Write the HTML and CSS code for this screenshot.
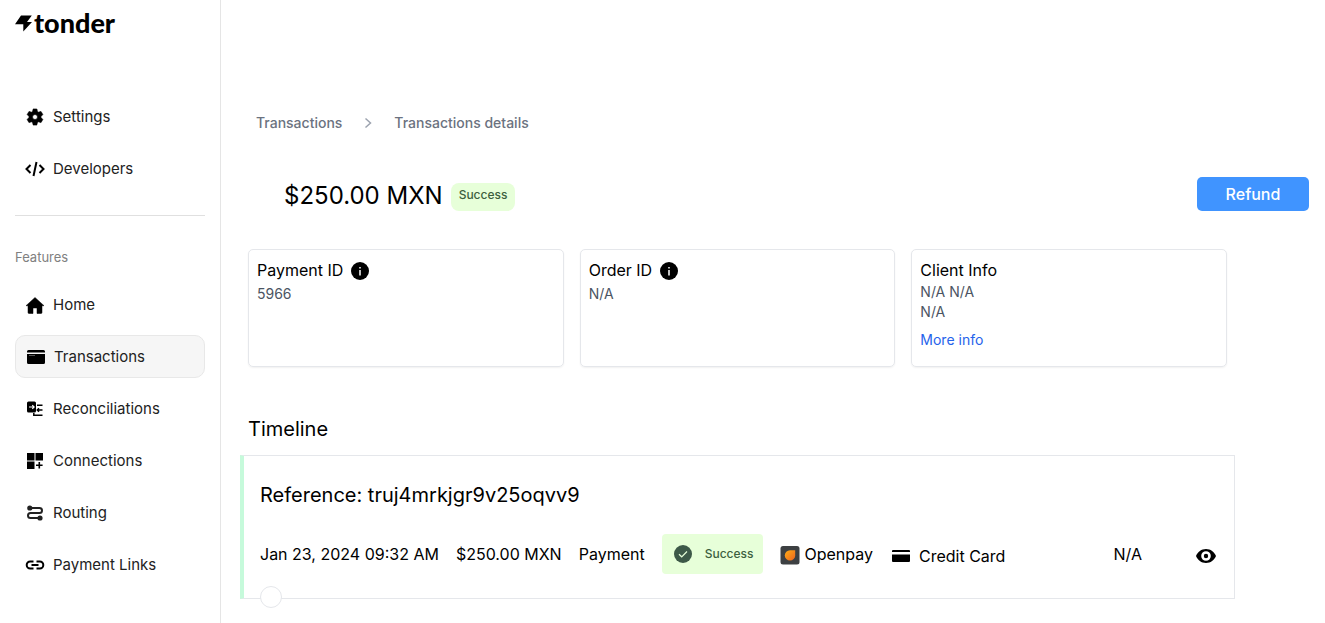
FILE: index.html
```html
<!DOCTYPE html>
<html lang="en">
<head>
<meta charset="utf-8">
<meta name="viewport" content="width=device-width, initial-scale=1">
<title>Transaction details</title>
<link rel="stylesheet" href="styles.css">
</head>
<body>
<div class="app">
  <aside class="sidebar">
    <a class="logo" href="#">
      <svg class="logo-mark" viewBox="0 0 17 17" aria-hidden="true"><path d="M6 .5h10.800L12 7h5L8.300 16.500V9.200H0z"/></svg>
      <span>tonder</span>
    </a>
    <nav class="nav" aria-label="Account">
      <a class="nav-item" href="#">
        <svg class="icon" viewBox="0 0 24 24"><path d="M19.14 12.94c.04-.3.06-.61.06-.94 0-.32-.02-.64-.07-.94l2.03-1.58a.49.49 0 0 0 .12-.61l-1.92-3.32a.49.49 0 0 0-.59-.22l-2.39.96c-.5-.38-1.03-.7-1.62-.94l-.36-2.54a.48.48 0 0 0-.48-.41h-3.84c-.24 0-.43.17-.47.41l-.36 2.54c-.59.24-1.13.57-1.62.94l-2.39-.96a.48.48 0 0 0-.59.22L2.74 8.87c-.12.21-.08.47.12.61l2.03 1.58c-.05.3-.09.63-.09.94s.02.64.07.94l-2.03 1.58a.49.49 0 0 0-.12.61l1.92 3.32c.12.22.37.29.59.22l2.39-.96c.5.38 1.03.7 1.62.94l.36 2.54c.05.24.24.41.48.41h3.84c.24 0 .44-.17.47-.41l.36-2.54c.59-.24 1.13-.56 1.62-.94l2.39.96c.22.08.47 0 .59-.22l1.92-3.32a.48.48 0 0 0-.12-.61zM12 15a3 3 0 1 1 0-6 3 3 0 0 1 0 6z" stroke="#000" stroke-width=".8"/></svg>
        Settings
      </a>
      <a class="nav-item" href="#">
        <svg class="icon line" viewBox="0 0 20 20"><path d="M5.500 6 1.500 10l4 4M14.500 6l4 4-4 4M11.500 3l-3 14"/></svg>
        Developers
      </a>
    </nav>
    <hr class="divider">
    <h2 class="nav-title">Features</h2>
    <nav class="nav" aria-label="Features">
      <a class="nav-item" href="#">
        <svg class="icon" viewBox="0 0 20 20"><path d="M10 2.500 19 10.700h-2V17.500a1 1 0 0 1-1 1h-4v-5.500H8v5.500H4a1 1 0 0 1-1-1v-6.800H1z" stroke="#000" stroke-linejoin="round" stroke-width=".5"/></svg>
        Home
      </a>
      <a class="nav-item active" href="#" aria-current="page">
        <svg class="icon" viewBox="0 0 20 20"><path d="M1 5.500V4.500Q1 3 2.500 3h15Q19 3 19 4.500v1zM1 7h18v8.500q0 1.500-1.500 1.500h-15Q1 17 1 15.500z"/><path d="M3 8.500h6" stroke="#555" stroke-width="1"/></svg>
        Transactions
      </a>
      <a class="nav-item" href="#">
        <svg class="icon" viewBox="0 0 20 20"><path d="M3.500 2.500h6Q11 2.500 11 4v8q0 1.500-1.500 1.500h-6Q2 13.500 2 12V4q0-1.500 1.500-1.500z"/><path d="M4 8h5M7.300 6.200 9.100 8l-1.800 1.800" fill="none" stroke="#fff" stroke-width="1.200"/><path d="M12 6.300h5.500M17.500 11h-5M14 9.300 12.300 11l1.700 1.700M8.800 14v2.300h8.700" fill="none" stroke="#000" stroke-width="1.500"/></svg>
        Reconciliations
      </a>
      <a class="nav-item" href="#">
        <svg class="icon" viewBox="0 0 20 20"><path d="M2 2h7.500v7.500H2zM10.500 2H18v7.500h-7.500zM2 10.500h7.500V18H2z"/><path d="M14.300 11v6.500M11 14.300h6.600" fill="none" stroke="#000" stroke-width="1.600"/></svg>
        Connections
      </a>
      <a class="nav-item" href="#">
        <svg class="icon line dark" viewBox="0 0 20 20"><path d="M4.500 5h10a2.500 2.500 0 0 1 0 5h-9a2.500 2.500 0 0 0 0 5h10"/><circle cx="4.800" cy="5" r="1.600" fill="#222"/><circle cx="15" cy="15" r="1.600" fill="#222"/></svg>
        Routing
      </a>
      <a class="nav-item" href="#">
        <svg class="icon line" viewBox="0 0 20 20"><path d="M8.500 6.500H5.200a3.500 3.500 0 0 0 0 7h3.300M11.500 6.500h3.300a3.500 3.500 0 0 1 0 7h-3.300M6.500 10h7"/></svg>
        Payment Links
      </a>
    </nav>
  </aside>

  <main class="main">
    <nav class="breadcrumb" aria-label="Breadcrumb">
      <a href="#">Transactions</a>
      <svg class="chevron" viewBox="0 0 12 12" aria-hidden="true"><path d="M3.500 1.500 8.500 6l-5 4.500"/></svg>
      <a href="#">Transactions details</a>
    </nav>

    <header class="header">
      <h1 class="amount">$250.00 MXN</h1>
      <span class="badge">Success</span>
      <button class="refund" type="button">Refund</button>
    </header>

    <section class="cards">
      <article class="card">
        <h2 class="card-title">Payment ID
          <svg class="info" viewBox="0 0 18 20" role="img" aria-label="Info"><circle cx="9" cy="11" r="9"/><path d="M9 7v1.500M9 10v5.500" stroke="#fff" stroke-width="1.500"/></svg>
        </h2>
        <p class="card-text">5966</p>
      </article>
      <article class="card">
        <h2 class="card-title">Order ID
          <svg class="info" viewBox="0 0 18 20" role="img" aria-label="Info"><circle cx="9" cy="11" r="9"/><path d="M9 7v1.500M9 10v5.500" stroke="#fff" stroke-width="1.500"/></svg>
        </h2>
        <p class="card-text">N/A</p>
      </article>
      <article class="card compact">
        <h2 class="card-title">Client Info</h2>
        <p class="card-text">N/A N/A</p>
        <p class="card-text">N/A</p>
        <a class="more" href="#">More info</a>
      </article>
    </section>

    <h2 class="timeline-title">Timeline</h2>
    <section class="timeline">
      <h3 class="reference">Reference: truj4mrkjgr9v25oqvv9</h3>
      <div class="event">
        <span>Jan 23, 2024 09:32 AM</span>
        <span>$250.00 MXN</span>
        <span>Payment</span>
        <span class="status">
          <svg class="check" viewBox="0 0 18 18" aria-hidden="true"><circle cx="9" cy="9" r="9" fill="#3d5948"/><path d="m5 9.300 2.700 2.500L13 6.500" fill="none" stroke="#e7ffd9" stroke-width="1.200"/></svg>
          Success
        </span>
        <span class="provider">
          <svg class="provider-logo" viewBox="0 0 20 22" aria-hidden="true"><defs><linearGradient id="drop" x1="0" y1="0" x2="1" y2="1"><stop offset="0" stop-color="#ffad16"/><stop offset="1" stop-color="#ec641f"/></linearGradient></defs><rect x=".5" y="3" width="19" height="18.500" rx="2.500" fill="#3d4042"/><path d="M15.200 7.200V12.400A5.200 5.200 0 1 1 10 7.200z" fill="url(#drop)"/></svg>
          Openpay
        </span>
        <span class="method">
          <svg class="card-icon" viewBox="0 0 18 14" aria-hidden="true"><path d="M0 3V2q0-1 1-1h16q1 0 1 1v1zM0 5.500h18V12q0 1-1 1H1q-1 0-1-1z"/></svg>
          Credit Card
        </span>
        <span class="event-end">N/A</span>
        <button class="view" type="button" aria-label="View details">
          <svg class="eye" viewBox="0 0 20 14" aria-hidden="true"><path fill-rule="evenodd" d="M10 0c4.600 0 8.300 2.800 10 7-1.700 4.200-5.400 7-10 7S1.700 11.200 0 7C1.700 2.800 5.400 0 10 0zm0 2.200a4.800 4.800 0 1 0 0 9.600 4.800 4.800 0 0 0 0-9.600zm0 2.600a2.200 2.200 0 1 1 0 4.400 2.200 2.200 0 0 1 0-4.400z"/></svg>
        </button>
      </div>
      <span class="dot"></span>
    </section>
  </main>
</div>
</body>
</html>
```
FILE: styles.css
```css
* { box-sizing: border-box; }
body {
  margin: 0;
  background: #fff;
  color: #000;
  font-family: Inter, "Liberation Sans", sans-serif;
  font-size: 16px;
  line-height: 24px;
}
h1, h2, h3, p { margin: 0; font-weight: 400; }
a { color: inherit; text-decoration: none; }
button { border: 0; font: inherit; cursor: pointer; }
svg { display: block; flex: none; }

.app { display: flex; min-height: 100vh; }

.sidebar {
  flex: 0 0 221px;
  padding: 7px 15px 0;
  border-right: 1px solid #e5e5e5;
}
.logo {
  display: flex;
  align-items: center;
  height: 32px;
  margin-bottom: 56px;
  font-family: Lato, sans-serif;
  font-size: 27px;
  font-weight: 900;
}
.logo-mark { width: 17px; height: 17px; margin-right: 2px; }
.nav { display: flex; flex-direction: column; gap: 9px; }
.nav-item {
  display: flex;
  align-items: center;
  gap: 8px;
  height: 43px;
  padding: 0 9px;
  border: 1px solid transparent;
  border-radius: 10px;
  color: #222;
  font-size: 15px;
}
.nav-item.active { padding: 0 10px; background: #f6f6f6; border-color: #e8e8e8; }
.icon { width: 20px; height: 20px; }
.line { fill: none; stroke: #000; stroke-width: 2; }
.line.dark { stroke: #222; }
.divider {
  margin: 25px 0 0;
  border: 0;
  border-top: 1px solid #e0e0e0;
}
.nav-title {
  margin: 31px 0 16px;
  color: #808080;
  font-size: 13px;
  line-height: 20px;
}

.main { flex: 1; min-width: 0; padding: 111px 16px 24px 19px; }
.breadcrumb {
  display: flex;
  align-items: center;
  gap: 20px;
  padding-left: 16px;
  color: #6b7280;
  font-size: 14px;
  font-weight: 500;
}
.chevron {
  width: 12px;
  height: 12px;
  fill: none;
  stroke: #9ca3af;
  stroke-width: 1.5;
}
.header {
  display: flex;
  align-items: flex-end;
  gap: 8px;
  margin-top: 42px;
  padding-left: 44px;
}
.amount { font-size: 24px; line-height: 30px; }
.badge {
  height: 28px;
  padding: 0 8px;
  border-radius: 8px;
  background: #e7ffd9;
  color: #3d5f3f;
  font-size: 12px;
  font-weight: 500;
}
.refund {
  width: 112px;
  height: 34px;
  margin-left: auto;
  border-radius: 5px;
  background: #4094ff;
  color: #fff;
  font-weight: 500;
}

.cards {
  display: grid;
  grid-template-columns: repeat(3, 1fr);
  gap: 16px;
  margin: 38px 82px 0 8px;
}
.card {
  min-height: 118px;
  padding: 8px;
  border: 1px solid #e5e7eb;
  border-radius: 5px;
  box-shadow: 0 1px 2px rgba(0, 0, 0, .06);
}
.card-title {
  display: flex;
  align-items: center;
  gap: 8px;
  font-size: 16px;
}
.info { width: 18px; height: 20px; }
.card-text { margin-top: 2px; color: #4b5563; font-size: 14px; line-height: 20px; }
.compact .card-text { margin: 0; }
.more {
  display: block;
  margin-top: 8px;
  color: #2563eb;
  font-size: 14px;
  line-height: 20px;
}

.timeline-title { margin: 48px 0 0 8px; font-size: 20px; line-height: 28px; }
.timeline {
  position: relative;
  margin: 12px 74px 0 0;
  padding: 24px 16px;
  border: 1px solid #e5e7eb;
  border-left: 4px solid #c6fadb;
}
.reference { font-size: 20px; line-height: 30px; }
.event { display: flex; align-items: center; gap: 17px; margin-top: 24px; white-space: nowrap; }
.status {
  display: flex;
  align-items: center;
  gap: 13px;
  height: 40px;
  padding: 0 10px 0 12px;
  border-radius: 4px;
  background: #e7ffd9;
  color: #3d5f3f;
  font-size: 12px;
  font-weight: 500;
}
.check { width: 18px; height: 18px; }
.provider { display: flex; align-items: center; gap: 4px; }
.provider-logo { width: 20px; height: 22px; }
.method { display: flex; align-items: center; gap: 9px; padding: 4px 0 0 2px; }
.card-icon { width: 18px; height: 14px; }
.event-end { margin-left: auto; }
.view { display: flex; margin-left: 37px; padding: 4px 2px 0 0; background: none; }
.eye { width: 20px; height: 14px; }
.dot {
  position: absolute;
  left: 16px;
  bottom: -10px;
  width: 22px;
  height: 22px;
  border: 1px solid #e5e7eb;
  border-radius: 50%;
  background: #fff;
}
```
